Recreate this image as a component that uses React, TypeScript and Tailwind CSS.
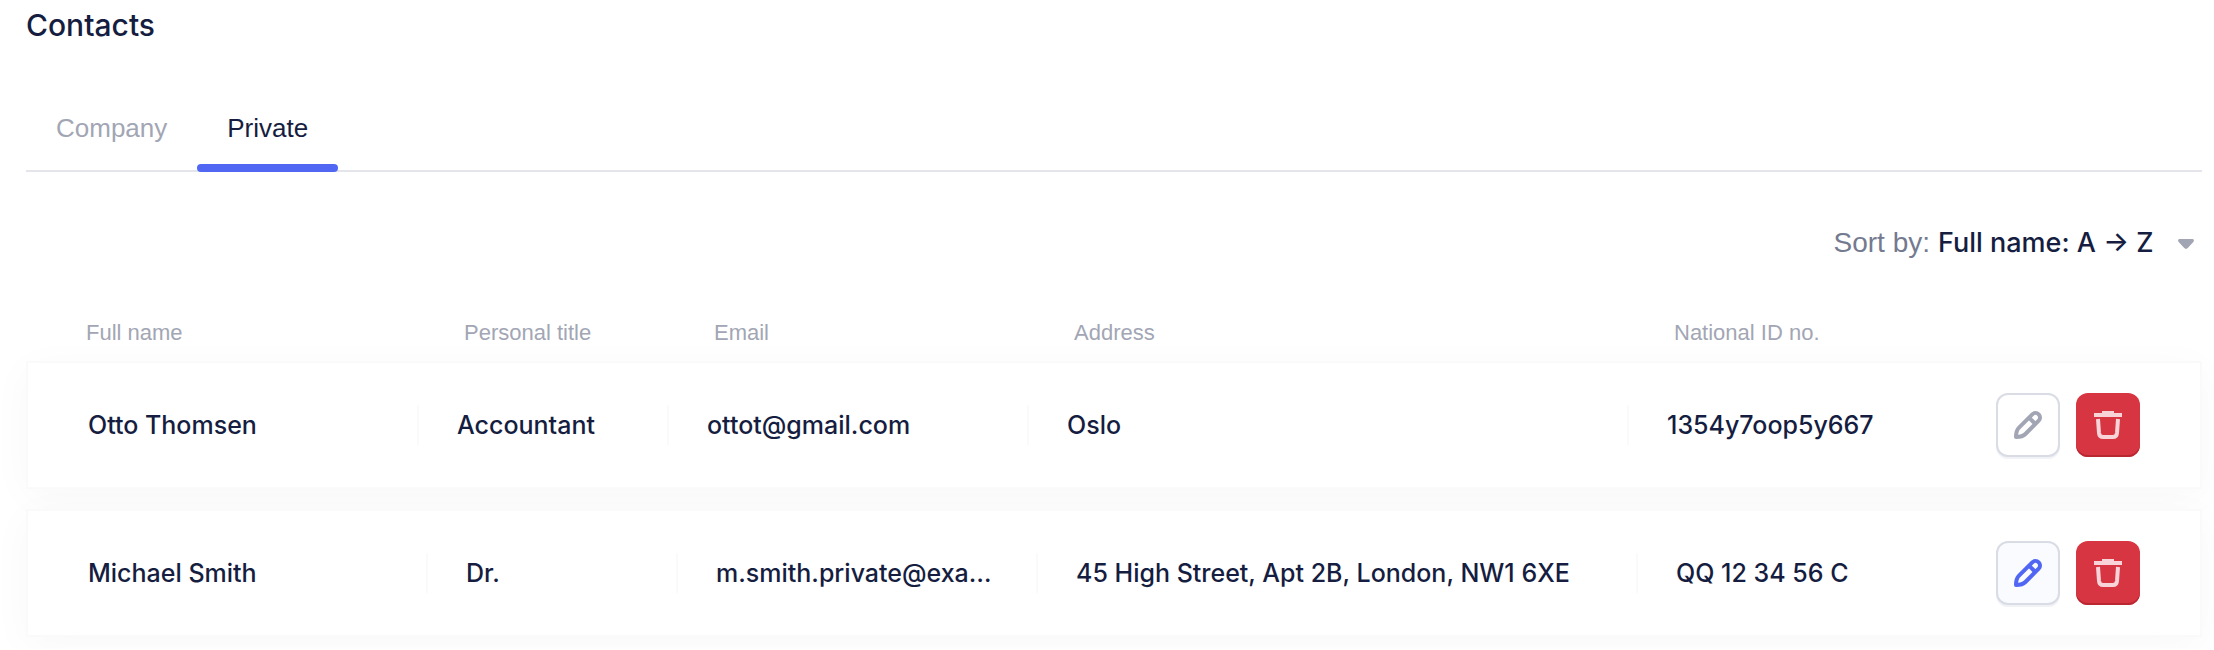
import { useState } from "react";

const contacts = [
  {
    name: "Otto Thomsen",
    title: "Accountant",
    email: "ottot@gmail.com",
    address: "Oslo",
    nationalId: "1354y7oop5y667",
    columns: "grid-cols-[389fr_250fr_360fr_600fr_573fr]",
    active: false,
  },
  {
    name: "Michael Smith",
    title: "Dr.",
    email: "m.smith.private@exa…",
    address: "45 High Street, Apt 2B, London, NW1 6XE",
    nationalId: "QQ 12 34 56 C",
    columns: "grid-cols-[398fr_250fr_360fr_600fr_564fr]",
    active: true,
  },
];

const PencilIcon = () => (
  <svg width="32" height="32" viewBox="0 0 32 32" fill="none" stroke="currentColor" strokeWidth="4" strokeLinejoin="round" aria-hidden="true">
    <path d="M4 28c0-4 .5-7 3-9.400L20.300 5.300a4.500 4.500 0 0 1 6.400 6.400L13.400 25C11 27.500 8.400 28 4 28Z" />
    <path d="m17 8.600 6.400 6.400" />
  </svg>
);

const TrashIcon = () => (
  <svg width="32" height="32" viewBox="0 0 32 32" fill="none" stroke="currentColor" strokeWidth="4" aria-hidden="true">
    <path d="M2 6h28" />
    <path d="M10 3h12" strokeWidth="2" />
    <path d="M6 10l1 14c.3 3 1.500 4 4 4h10c2.500 0 3.700-1 4-4l1-14" />
  </svg>
);

const ContactRow = ({ contact }: { contact: (typeof contacts)[number] }) => {
  const cell = "min-w-0 truncate border-l-2 border-[#fafafb] pl-[38px] pr-6 leading-10";

  return (
    <tr
      className={`grid h-32 items-center border-2 border-[#fafafa] bg-white text-[25px] font-medium shadow-[0_8px_40px_rgba(0,0,0,0.03)] ${contact.columns}`}
    >
      <td className="truncate pl-[60px] pr-6 leading-10">{contact.name}</td>
      <td className={cell}>{contact.title}</td>
      <td className={cell}>{contact.email}</td>
      <td className={cell}>{contact.address}</td>
      <td className="flex min-w-0 items-center justify-between pr-[60px]">
        <span className={cell}>{contact.nationalId}</span>
        <div className="flex shrink-0 gap-4">
          <button
            aria-label={`Edit ${contact.name}`}
            className={`flex size-16 items-center justify-center rounded-xl border-2 border-[#d9dce5] shadow-[0_2px_0_#f1f2f6] ${
              contact.active ? "bg-[#f9fbff] text-[#5167f4]" : "bg-white text-[#a2a6b4]"
            }`}
          >
            <PencilIcon />
          </button>
          <button
            aria-label={`Delete ${contact.name}`}
            className="flex size-16 items-center justify-center rounded-xl bg-[#d63541] text-[#f8d3d7] shadow-[inset_0_-2px_0_#b92731]"
          >
            <TrashIcon />
          </button>
        </div>
      </td>
    </tr>
  );
};

const App = () => {
  const [tab, setTab] = useState("Private");
  const heading = "pl-[38px] text-left font-normal";

  return (
    <main className="overflow-hidden bg-white pb-3 pl-[26px] pr-3 font-['Inter','Liberation_Sans',sans-serif] text-[#151d40]">
      <h1 className="pt-1 text-[30px] font-medium leading-[42px]">Contacts</h1>

      <div role="tablist" className="mt-[50px] flex h-[76px] border-b-2 border-[#e4e5ea] font-['Liberation_Sans',sans-serif] text-[26px]">
        {["Company", "Private"].map((name) => (
          <button
            key={name}
            role="tab"
            aria-selected={tab === name}
            onClick={() => setTab(name)}
            className={`-mb-0.5 flex flex-col justify-between ${tab === name ? "" : "text-[#a2a6b4]"}`}
          >
            <span className="px-[30px] pt-3 leading-10">{name}</span>
            <span className={`h-2 w-full rounded-full ${tab === name ? "bg-[#5167f4]" : ""}`} />
          </button>
        ))}
      </div>

      <div className="mt-[50px] flex items-center justify-end text-[28px] leading-10">
        <label htmlFor="sort" className="font-['Liberation_Sans',sans-serif] text-[#747a8f]">
          Sort by:
        </label>
        <div className="relative ml-2">
          <select id="sort" className="appearance-none bg-transparent pr-12 text-[27px] font-medium">
            <option>Full name: A → Z</option>
          </select>
          <svg className="pointer-events-none absolute right-2 top-4" width="16" height="12" viewBox="0 0 16 12" fill="#a2a6b4" aria-hidden="true">
            <path d="M2 1h12c2 0 2.500 1.500 1.300 3L10 9.800c-1.300 1.500-2.700 1.500-4 0L.7 4C-.5 2.500 0 1 2 1Z" />
          </svg>
        </div>
      </div>

      <table className="mt-[50px] block">
        <thead className="block">
          <tr className="grid grid-cols-[400fr_250fr_360fr_600fr_566fr] font-['Liberation_Sans',sans-serif] text-[22px] leading-10 text-[#a2a6b4]">
            <th className="pl-[60px] text-left font-normal">Full name</th>
            <th className={heading}>Personal title</th>
            <th className={heading}>Email</th>
            <th className={heading}>Address</th>
            <th className={heading}>National ID no.</th>
          </tr>
        </thead>
        <tbody className="mt-2 flex flex-col gap-5">
          {contacts.map((contact) => (
            <ContactRow key={contact.name} contact={contact} />
          ))}
        </tbody>
      </table>
    </main>
  );
};

export default App;
